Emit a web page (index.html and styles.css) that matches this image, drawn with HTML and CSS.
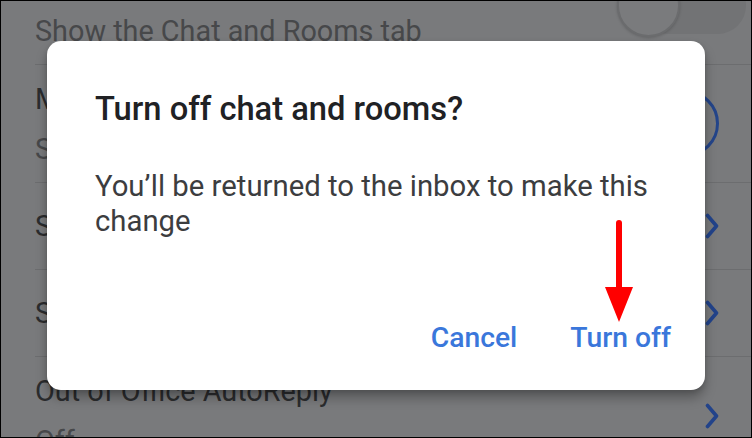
FILE: index.html
```html
<!DOCTYPE html>
<html lang="en">
<head>
<meta charset="utf-8">
<title>Turn off chat and rooms?</title>
<link rel="stylesheet" href="styles.css">
</head>
<body>
<div class="screen">
  <ul class="settings">
    <li class="row row-tall">
      <div class="row-text">
        <span class="row-title">Chat</span>
        <span class="row-sub">Show the Chat and Rooms tab</span>
      </div>
      <span class="toggle toggle-off"><span class="track"></span><span class="thumb"></span></span>
    </li>
    <li class="row row-tall">
      <div class="row-text">
        <span class="row-title">Meet</span>
        <span class="row-sub">Show the Meet tab for video calling</span>
      </div>
      <span class="toggle toggle-on"><span class="thumb"></span></span>
    </li>
    <li class="row row-short">
      <div class="row-text">
        <span class="row-title">Signature settings</span>
      </div>
      <svg class="chevron" viewBox="0 0 14 26" aria-hidden="true"><polyline points="2.5,2.5 11.5,13 2.5,23.5"/></svg>
    </li>
    <li class="row row-short">
      <div class="row-text">
        <span class="row-title">Smart features and personalization</span>
      </div>
      <svg class="chevron" viewBox="0 0 14 26" aria-hidden="true"><polyline points="2.5,2.5 11.5,13 2.5,23.5"/></svg>
    </li>
    <li class="row row-tall">
      <div class="row-text">
        <span class="row-title">Out of Office AutoReply</span>
        <span class="row-sub">Off</span>
      </div>
      <svg class="chevron" viewBox="0 0 14 26" aria-hidden="true"><polyline points="2.5,2.5 11.5,13 2.5,23.5"/></svg>
    </li>
  </ul>

  <div class="dialog" role="dialog" aria-labelledby="dlg-title">
    <h2 class="dialog-title" id="dlg-title">Turn off chat and rooms?</h2>
    <p class="dialog-body">You’ll be returned to the inbox to make this change</p>
    <div class="dialog-actions">
      <button class="btn" type="button">Cancel</button>
      <button class="btn" type="button">Turn off</button>
    </div>
  </div>

  <svg class="arrow" viewBox="0 0 34 106" aria-hidden="true">
    <line x1="17" y1="5" x2="17" y2="72"/>
    <polygon points="3,69 31,69 17,104"/>
  </svg>
</div>
</body>
</html>
```

FILE: styles.css
```css
* { box-sizing: border-box; }

html, body {
  margin: 0;
  padding: 0;
  background: #000;
}

.screen {
  position: relative;
  width: 752px;
  height: 438px;
  border: 1px solid #000;
  overflow: hidden;
  background: #797a7c;
  font-family: Roboto, "Noto Sans", Arial, sans-serif;
}

/* ---------- settings list (dimmed) ---------- */
.settings {
  list-style: none;
  margin: -54px 0 0 0;
  padding: 0;
}

.row {
  display: flex;
  align-items: center;
  box-sizing: content-box;
  margin-left: 34px;
  padding-right: 32px;
  border-bottom: 1px solid #6c6d6f;
}

.row-tall { height: 117px; }
.row-short { height: 86px; }

.row-text {
  flex: 1;
  min-width: 0;
  display: flex;
  flex-direction: column;
  gap: 16px;
}

.row-title,
.row-sub {
  font-size: 28.8px;
  line-height: 34px;
  white-space: nowrap;
  overflow: hidden;
}

.row-title { color: #2b2c2e; }
.row-sub { color: #47484a; }

.chevron {
  flex: none;
  width: 14px;
  height: 26px;
  fill: none;
  stroke: #22438a;
  stroke-width: 3.6;
  stroke-linecap: round;
  stroke-linejoin: round;
}

.toggle {
  flex: none;
  position: relative;
  display: flex;
  align-items: center;
}

.toggle-off {
  width: 129px;
  height: 63px;
  margin-right: -27px;
}

.toggle-off .track {
  position: absolute;
  left: 24px;
  right: 0;
  top: 3px;
  bottom: 3px;
  border-radius: 29px;
  background: #727375;
}

.toggle-off .thumb {
  position: relative;
  width: 63px;
  height: 63px;
  border-radius: 50%;
  background: #7a7b7d;
  border: 2px solid #6b6c6e;
  box-shadow: 0 1px 3px rgba(0, 0, 0, 0.18);
}

.toggle-on {
  width: 67px;
  height: 67px;
  justify-content: flex-end;
}

.toggle-on .thumb {
  width: 67px;
  height: 67px;
  border-radius: 50%;
  border: 3.5px solid #24458a;
  background: #797a7c;
}

/* ---------- dialog ---------- */
.dialog {
  position: absolute;
  left: 46px;
  top: 40px;
  width: 658px;
  height: 349px;
  background: #fff;
  border-radius: 14px;
  box-shadow: 0 8px 12px rgba(0, 0, 0, 0.28), 0 2px 5px rgba(0, 0, 0, 0.12);
  padding: 48px 34px 34px 48px;
  display: flex;
  flex-direction: column;
}

.dialog-title {
  margin: 0;
  font-size: 32.7px;
  line-height: 40px;
  font-weight: 500;
  color: #202124;
}

.dialog-body {
  margin: 40px 10px 0 0;
  font-size: 29.3px;
  line-height: 35px;
  font-weight: 400;
  color: #3c3d3f;
}

.dialog-actions {
  margin-top: auto;
  display: flex;
  justify-content: flex-end;
  gap: 53px;
}

.btn {
  background: none;
  border: 0;
  padding: 0;
  font-family: inherit;
  font-size: 28.3px;
  line-height: 36px;
  font-weight: 500;
  color: #3a77db;
}

/* ---------- annotation arrow ---------- */
.arrow {
  position: absolute;
  left: 601px;
  top: 217px;
  width: 34px;
  height: 106px;
}

.arrow line {
  stroke: #ff0000;
  stroke-width: 6;
  stroke-linecap: round;
}

.arrow polygon {
  fill: #ff0000;
}
```
